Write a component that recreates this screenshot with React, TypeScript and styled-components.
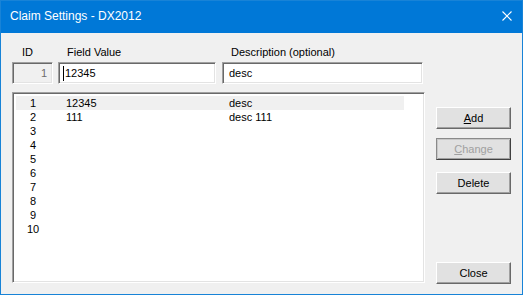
import React from "react";
import styled, { createGlobalStyle } from "styled-components";

const GlobalStyle = createGlobalStyle`
  html, body {
    margin: 0;
    padding: 0;
    background: #ffffff;
  }
  body {
    font-family: "Liberation Sans", Arial, sans-serif;
    font-size: 11px;
    color: #000;
  }
`;

const Window = styled.div`
  width: 523px;
  height: 295px;
  box-sizing: border-box;
  border: 1px solid #1883d7;
  background: #f0f0f0;
  display: flex;
  flex-direction: column;
`;

const TitleBar = styled.div`
  height: 30px;
  flex: none;
  background: #0078d7;
  color: #fff;
  display: flex;
  align-items: center;
  justify-content: space-between;
  padding: 0 10px 2px 9px;
  font-size: 12px;
`;

const CloseGlyph = styled.svg`
  width: 10px;
  height: 10px;
  display: block;
`;

const Body = styled.div`
  flex: 1;
  display: flex;
  gap: 11px;
  padding: 12px 11px 11px 11px;
  min-height: 0;
`;

const LeftColumn = styled.div`
  width: 413px;
  display: flex;
  flex-direction: column;
`;

const FieldGrid = styled.div`
  display: grid;
  grid-template-columns: 41px 158px 202px;
  column-gap: 5px;
  row-gap: 3px;
  & > :nth-child(3n) {
    margin-left: 1px;
  }
`;

const Label = styled.div`
  height: 14px;
  line-height: 14px;
  padding-left: ${(p: { $indent: number }) => p.$indent}px;
  white-space: nowrap;
`;

const sunken = `
  box-sizing: border-box;
  border: 1px solid;
  border-color: #a0a0a0 #ffffff #ffffff #a0a0a0;
  box-shadow: inset 1px 1px 0 #696969, inset -1px -1px 0 #e3e3e3;
`;

const TextBox = styled.div<{ $readOnly?: boolean }>`
  ${sunken}
  height: 22px;
  background: ${(p) => (p.$readOnly ? "#f0f0f0" : "#ffffff")};
  color: ${(p) => (p.$readOnly ? "#6d6d6d" : "#000")};
  display: flex;
  align-items: center;
  justify-content: ${(p) => (p.$readOnly ? "flex-end" : "flex-start")};
  padding: 0 ${(p) => (p.$readOnly ? "5px" : "0")} 0 ${(p) => (p.$readOnly ? "0" : "6px")};
  white-space: nowrap;
`;

const Caret = styled.span`
  display: inline-block;
  width: 1px;
  height: 15px;
  background: #000;
  margin-left: -2px;
  margin-right: 1px;
`;

const ListBox = styled.div`
  ${sunken}
  margin-top: 8px;
  height: 193px;
  background: #ffffff;
  padding: 3px 0 0 3px;
`;

const ListRow = styled.div<{ $selected?: boolean }>`
  width: 388px;
  height: 14px;
  line-height: 14px;
  display: grid;
  grid-template-columns: 34px 179px 1fr;
  background: ${(p) => (p.$selected ? "#f0f0f0" : "transparent")};
`;

const NumCell = styled.span`
  text-align: center;
`;

const TextCell = styled.span<{ $pad: number }>`
  padding-left: ${(p) => p.$pad}px;
  white-space: nowrap;
`;

const ButtonColumn = styled.div`
  width: 75px;
  display: flex;
  flex-direction: column;
  padding-top: 62px;
`;

const Button = styled.div<{ $disabled?: boolean; $gap?: number }>`
  box-sizing: border-box;
  height: 22px;
  margin-top: ${(p) => p.$gap ?? 0}px;
  background: #e1e1e1;
  display: flex;
  align-items: center;
  justify-content: center;
  color: ${(p) => (p.$disabled ? "#a0a0a0" : "#000")};
  border: 1px solid;
  border-color: ${(p) =>
    p.$disabled ? "#8a8a8a #404040 #404040 #8a8a8a" : "#ffffff #696969 #696969 #ffffff"};
  box-shadow: ${(p) =>
    p.$disabled
      ? "inset 1px 1px 0 #c8c8c8, inset -1px -1px 0 #a0a0a0"
      : "inset -1px -1px 0 #a0a0a0"};
`;

const PushDown = styled.div`
  margin-top: auto;
  margin-bottom: -1px;
`;

const rows: { n: number; value: string; desc: string }[] = [
  { n: 1, value: "12345", desc: "desc" },
  { n: 2, value: "111", desc: "desc 111" },
  { n: 3, value: "", desc: "" },
  { n: 4, value: "", desc: "" },
  { n: 5, value: "", desc: "" },
  { n: 6, value: "", desc: "" },
  { n: 7, value: "", desc: "" },
  { n: 8, value: "", desc: "" },
  { n: 9, value: "", desc: "" },
  { n: 10, value: "", desc: "" },
];

export default function App() {
  return (
    <>
      <GlobalStyle />
      <Window>
        <TitleBar>
          <span>Claim Settings - DX2012</span>
          <CloseGlyph viewBox="0 0 10 10">
            <path d="M0.5 0.5 L9.5 9.5 M9.5 0.5 L0.5 9.5" stroke="#fff" strokeWidth="1.1" fill="none" />
          </CloseGlyph>
        </TitleBar>
        <Body>
          <LeftColumn>
            <FieldGrid>
              <Label $indent={10}>ID</Label>
              <Label $indent={9}>Field Value</Label>
              <Label $indent={9}>Description (optional)</Label>
              <TextBox $readOnly>1</TextBox>
              <TextBox>
                <Caret />
                12345
              </TextBox>
              <TextBox>desc</TextBox>
            </FieldGrid>
            <ListBox>
              {rows.map((r) => (
                <ListRow key={r.n} $selected={r.n === 1}>
                  <NumCell>{r.n}</NumCell>
                  <TextCell $pad={16}>{r.value}</TextCell>
                  <TextCell $pad={0}>{r.desc}</TextCell>
                </ListRow>
              ))}
            </ListBox>
          </LeftColumn>
          <ButtonColumn>
            <Button>
              <span><u>A</u>dd</span>
            </Button>
            <Button $disabled $gap={9}>
              <span><u>C</u>hange</span>
            </Button>
            <Button $gap={12}>Delete</Button>
            <PushDown>
              <Button>Close</Button>
            </PushDown>
          </ButtonColumn>
        </Body>
      </Window>
    </>
  );
}
